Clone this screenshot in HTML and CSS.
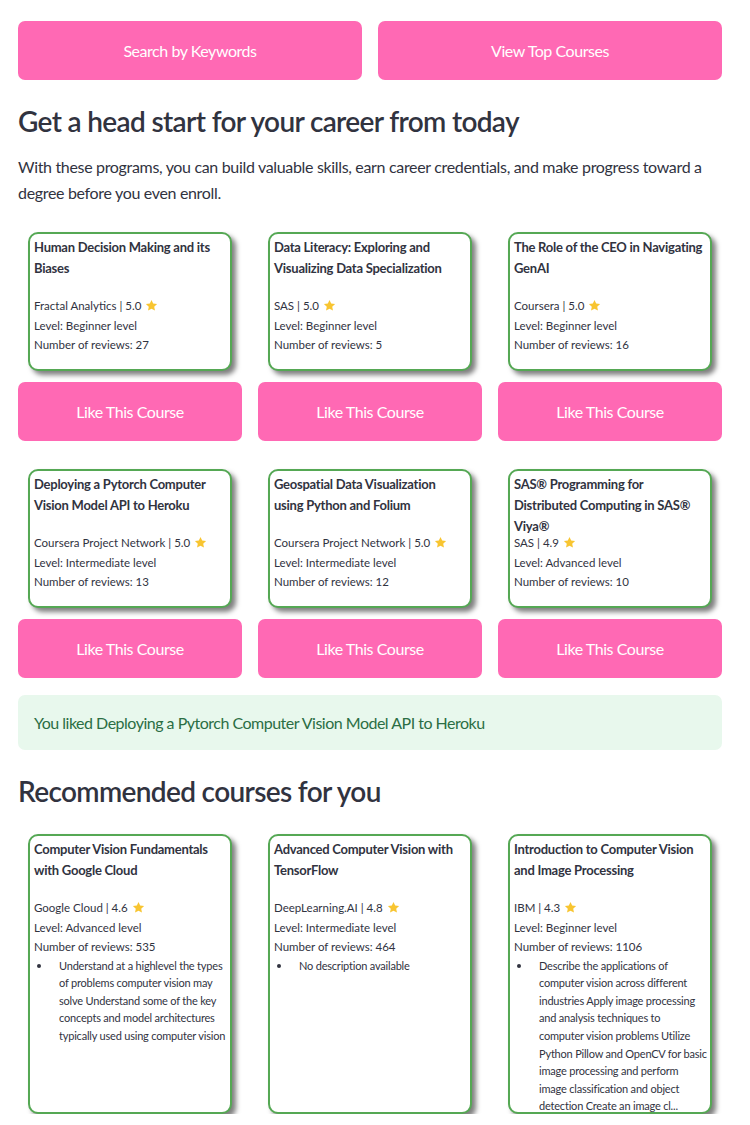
FILE: index.html
```html
<!DOCTYPE html>
<html lang="en">
<head>
<meta charset="utf-8">
<title>Courses</title>
<link rel="stylesheet" href="styles.css">
</head>
<body>
<div class="main">
  <div class="top-buttons">
    <button class="btn">Search by Keywords</button>
    <button class="btn">View Top Courses</button>
  </div>

  <h3 class="heading">Get a head start for your career from today</h3>
  <p class="lead">With these programs, you can build valuable skills, earn career credentials, and make progress toward a degree before you even enroll.</p>

  <div class="course-grid">
    <div class="col">
      <div class="card">
        <div class="card-title">Human Decision Making and its Biases</div>
        <div class="meta">Fractal Analytics | 5.0 <svg class="star" viewBox="0 0 24 24"><path d="M12 1.8l3.1 6.6 7.2.9-5.3 5 1.4 7.1L12 17.9l-6.4 3.5 1.4-7.1-5.3-5 7.2-.9z"/></svg></div>
        <div class="meta">Level: Beginner level</div>
        <div class="meta">Number of reviews: 27</div>
      </div>
      <button class="btn like">Like This Course</button>
    </div>
    <div class="col">
      <div class="card">
        <div class="card-title">Data Literacy: Exploring and Visualizing Data Specialization</div>
        <div class="meta">SAS | 5.0 <svg class="star" viewBox="0 0 24 24"><path d="M12 1.8l3.1 6.6 7.2.9-5.3 5 1.4 7.1L12 17.9l-6.4 3.5 1.4-7.1-5.3-5 7.2-.9z"/></svg></div>
        <div class="meta">Level: Beginner level</div>
        <div class="meta">Number of reviews: 5</div>
      </div>
      <button class="btn like">Like This Course</button>
    </div>
    <div class="col">
      <div class="card">
        <div class="card-title">The Role of the CEO in Navigating GenAI</div>
        <div class="meta">Coursera | 5.0 <svg class="star" viewBox="0 0 24 24"><path d="M12 1.8l3.1 6.6 7.2.9-5.3 5 1.4 7.1L12 17.9l-6.4 3.5 1.4-7.1-5.3-5 7.2-.9z"/></svg></div>
        <div class="meta">Level: Beginner level</div>
        <div class="meta">Number of reviews: 16</div>
      </div>
      <button class="btn like">Like This Course</button>
    </div>

    <div class="col">
      <div class="card">
        <div class="card-title">Deploying a Pytorch Computer Vision Model API to Heroku</div>
        <div class="meta">Coursera Project Network | 5.0 <svg class="star" viewBox="0 0 24 24"><path d="M12 1.8l3.1 6.6 7.2.9-5.3 5 1.4 7.1L12 17.9l-6.4 3.5 1.4-7.1-5.3-5 7.2-.9z"/></svg></div>
        <div class="meta">Level: Intermediate level</div>
        <div class="meta">Number of reviews: 13</div>
      </div>
      <button class="btn like">Like This Course</button>
    </div>
    <div class="col">
      <div class="card">
        <div class="card-title">Geospatial Data Visualization using Python and Folium</div>
        <div class="meta">Coursera Project Network | 5.0 <svg class="star" viewBox="0 0 24 24"><path d="M12 1.8l3.1 6.6 7.2.9-5.3 5 1.4 7.1L12 17.9l-6.4 3.5 1.4-7.1-5.3-5 7.2-.9z"/></svg></div>
        <div class="meta">Level: Intermediate level</div>
        <div class="meta">Number of reviews: 12</div>
      </div>
      <button class="btn like">Like This Course</button>
    </div>
    <div class="col">
      <div class="card">
        <div class="card-title">SAS® Programming for Distributed Computing in SAS® Viya®</div>
        <div class="meta">SAS | 4.9 <svg class="star" viewBox="0 0 24 24"><path d="M12 1.8l3.1 6.6 7.2.9-5.3 5 1.4 7.1L12 17.9l-6.4 3.5 1.4-7.1-5.3-5 7.2-.9z"/></svg></div>
        <div class="meta">Level: Advanced level</div>
        <div class="meta">Number of reviews: 10</div>
      </div>
      <button class="btn like">Like This Course</button>
    </div>
  </div>

  <div class="alert">You liked Deploying a Pytorch Computer Vision Model API to Heroku</div>

  <h3 class="heading rec-heading">Recommended courses for you</h3>

  <div class="course-grid rec-grid">
    <div class="col">
      <div class="card tall">
        <div class="card-title">Computer Vision Fundamentals with Google Cloud</div>
        <div class="meta">Google Cloud | 4.6 <svg class="star" viewBox="0 0 24 24"><path d="M12 1.8l3.1 6.6 7.2.9-5.3 5 1.4 7.1L12 17.9l-6.4 3.5 1.4-7.1-5.3-5 7.2-.9z"/></svg></div>
        <div class="meta">Level: Advanced level</div>
        <div class="meta">Number of reviews: 535</div>
        <ul class="desc"><li><span>Understand at a highlevel the types of problems computer vision may solve Understand some of the key concepts and model architectures typically used using computer vision</span></li></ul>
      </div>
    </div>
    <div class="col">
      <div class="card tall">
        <div class="card-title">Advanced Computer Vision with TensorFlow</div>
        <div class="meta">DeepLearning.AI | 4.8 <svg class="star" viewBox="0 0 24 24"><path d="M12 1.8l3.1 6.6 7.2.9-5.3 5 1.4 7.1L12 17.9l-6.4 3.5 1.4-7.1-5.3-5 7.2-.9z"/></svg></div>
        <div class="meta">Level: Intermediate level</div>
        <div class="meta">Number of reviews: 464</div>
        <ul class="desc"><li><span>No description available</span></li></ul>
      </div>
    </div>
    <div class="col">
      <div class="card tall">
        <div class="card-title">Introduction to Computer Vision and Image Processing</div>
        <div class="meta">IBM | 4.3 <svg class="star" viewBox="0 0 24 24"><path d="M12 1.8l3.1 6.6 7.2.9-5.3 5 1.4 7.1L12 17.9l-6.4 3.5 1.4-7.1-5.3-5 7.2-.9z"/></svg></div>
        <div class="meta">Level: Beginner level</div>
        <div class="meta">Number of reviews: 1106</div>
        <ul class="desc"><li><span>Describe the applications of computer vision across different industries Apply image processing and analysis techniques to computer vision problems Utilize <span class="keep">Python Pillow and OpenCV for basic</span> image processing and perform image classification and object detection Create an image cl...</span></li></ul>
      </div>
    </div>
  </div>
</div>
</body>
</html>
```

FILE: styles.css
```css
* { box-sizing: border-box; }

body {
  margin: 0;
  background: #ffffff;
  color: #31333f;
  font-family: "Lato", "Noto Sans", sans-serif;
}

.main {
  padding: 21px 28px 0 18px;
}

.top-buttons {
  display: grid;
  grid-template-columns: 1fr 1fr;
  column-gap: 16px;
}

.btn {
  display: block;
  width: 100%;
  height: 59px;
  border: none;
  border-radius: 7px;
  background: #ff69b4;
  color: #ffffff;
  font-family: inherit;
  font-size: 16px;
  letter-spacing: -0.45px;
  cursor: pointer;
}

.heading {
  margin: 24px 0 0;
  font-size: 28px;
  line-height: 34px;
  font-weight: 600;
  letter-spacing: -0.65px;
  color: #31333f;
}

.lead {
  margin: 16px 0 0;
  font-size: 16px;
  line-height: 25.6px;
  letter-spacing: -0.33px;
}

.course-grid {
  display: grid;
  grid-template-columns: repeat(3, minmax(0, 1fr));
  column-gap: 16px;
  row-gap: 28px;
  margin-top: 27px;
}

.col {
  display: flex;
  flex-direction: column;
  gap: 11px;
  min-width: 0;
}

.card {
  margin: 0 10px;
  height: 139px;
  padding: 3px 4px 0;
  background: #ffffff;
  border: 2px solid #55a854;
  border-radius: 10px;
  box-shadow: 4px 4px 5px rgba(0, 0, 0, 0.5);
  overflow: hidden;
}

.card.tall {
  height: 280px;
}

.card-title {
  height: 59px;
  font-size: 13px;
  line-height: 21px;
  font-weight: 700;
  letter-spacing: -0.25px;
}

.meta {
  font-size: 11.5px;
  line-height: 19.5px;
  display: flex;
  align-items: center;
  gap: 4px;
  white-space: nowrap;
}

.star {
  width: 13px;
  height: 13px;
  fill: #f8c531;
}

.alert {
  margin-top: 17px;
  height: 55px;
  padding: 0 16px;
  display: flex;
  align-items: center;
  background: #e8f8ed;
  color: #2b6e44;
  border-radius: 7px;
  font-size: 16px;
  letter-spacing: -0.5px;
}

.rec-heading {
  margin-top: 24px;
}

.rec-grid {
  margin-top: 26px;
}

.desc {
  margin: 0;
  padding: 0;
  list-style: none;
  font-size: 11px;
  line-height: 17.6px;
  letter-spacing: -0.2px;
}

.desc li {
  display: flex;
  align-items: flex-start;
}

.desc li::before {
  content: "";
  flex: 0 0 auto;
  width: 4px;
  height: 4px;
  margin: 7px 18px 0 3px;
  border-radius: 50%;
  background: #31333f;
}

.desc li > span {
  min-width: 0;
}

.keep {
  white-space: nowrap;
}
```
